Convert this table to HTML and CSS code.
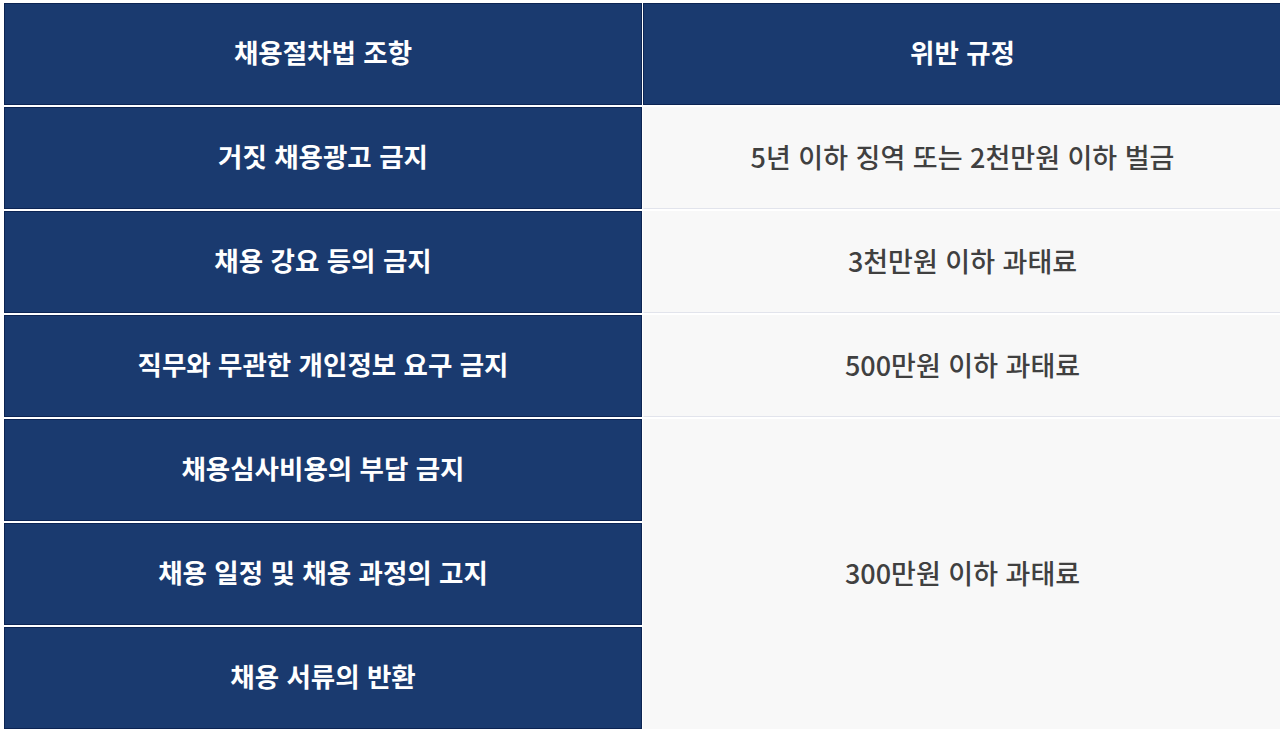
FILE: index.html
```html
<!DOCTYPE html>
<html lang="ko">
<head>
<meta charset="utf-8">
<title>채용절차법</title>
<link rel="stylesheet" href="styles.css">
</head>
<body>
<table class="law-table">
  <thead>
    <tr>
      <th class="head">채용절차법 조항</th>
      <th class="head">위반 규정</th>
    </tr>
  </thead>
  <tbody>
    <tr>
      <td class="item">거짓 채용광고 금지</td>
      <td class="rule">5년 이하 징역 또는 2천만원 이하 벌금</td>
    </tr>
    <tr>
      <td class="item">채용 강요 등의 금지</td>
      <td class="rule">3천만원 이하 과태료</td>
    </tr>
    <tr>
      <td class="item">직무와 무관한 개인정보 요구 금지</td>
      <td class="rule">500만원 이하 과태료</td>
    </tr>
    <tr>
      <td class="item">채용심사비용의 부담 금지</td>
      <td class="rule last" rowspan="3">300만원 이하 과태료</td>
    </tr>
    <tr>
      <td class="item">채용 일정 및 채용 과정의 고지</td>
    </tr>
    <tr>
      <td class="item">채용 서류의 반환</td>
    </tr>
  </tbody>
</table>
</body>
</html>
```

FILE: styles.css
```css
html, body {
  margin: 0;
  padding: 0;
  background: #ffffff;
}

body {
  font-family: "Noto Sans CJK KR", "Noto Sans", sans-serif;
}

.law-table {
  margin: 1px 0 0 3px;
  width: 1280px;
  table-layout: fixed;
  border-collapse: separate;
  border-spacing: 1px 2px;
}

.law-table th,
.law-table td {
  height: 97px;
  padding: 0 0 3px 0;
  text-align: center;
  vertical-align: middle;
  line-height: 1.3;
}

.head,
.item {
  background: #1a3a6f;
  border: 1px solid #0c2453;
  color: #ffffff;
  font-weight: 700;
  font-size: 26.5px;
}

.head:first-child,
.item {
  width: 636px;
}

.rule {
  background: #f8f8f8;
  border: 1px solid #f8f8f8;
  border-bottom-color: #e2e4ec;
  color: #404040;
  font-weight: 500;
  font-size: 27px;
}

.rule.last {
  border-bottom-color: #f8f8f8;
}
```
